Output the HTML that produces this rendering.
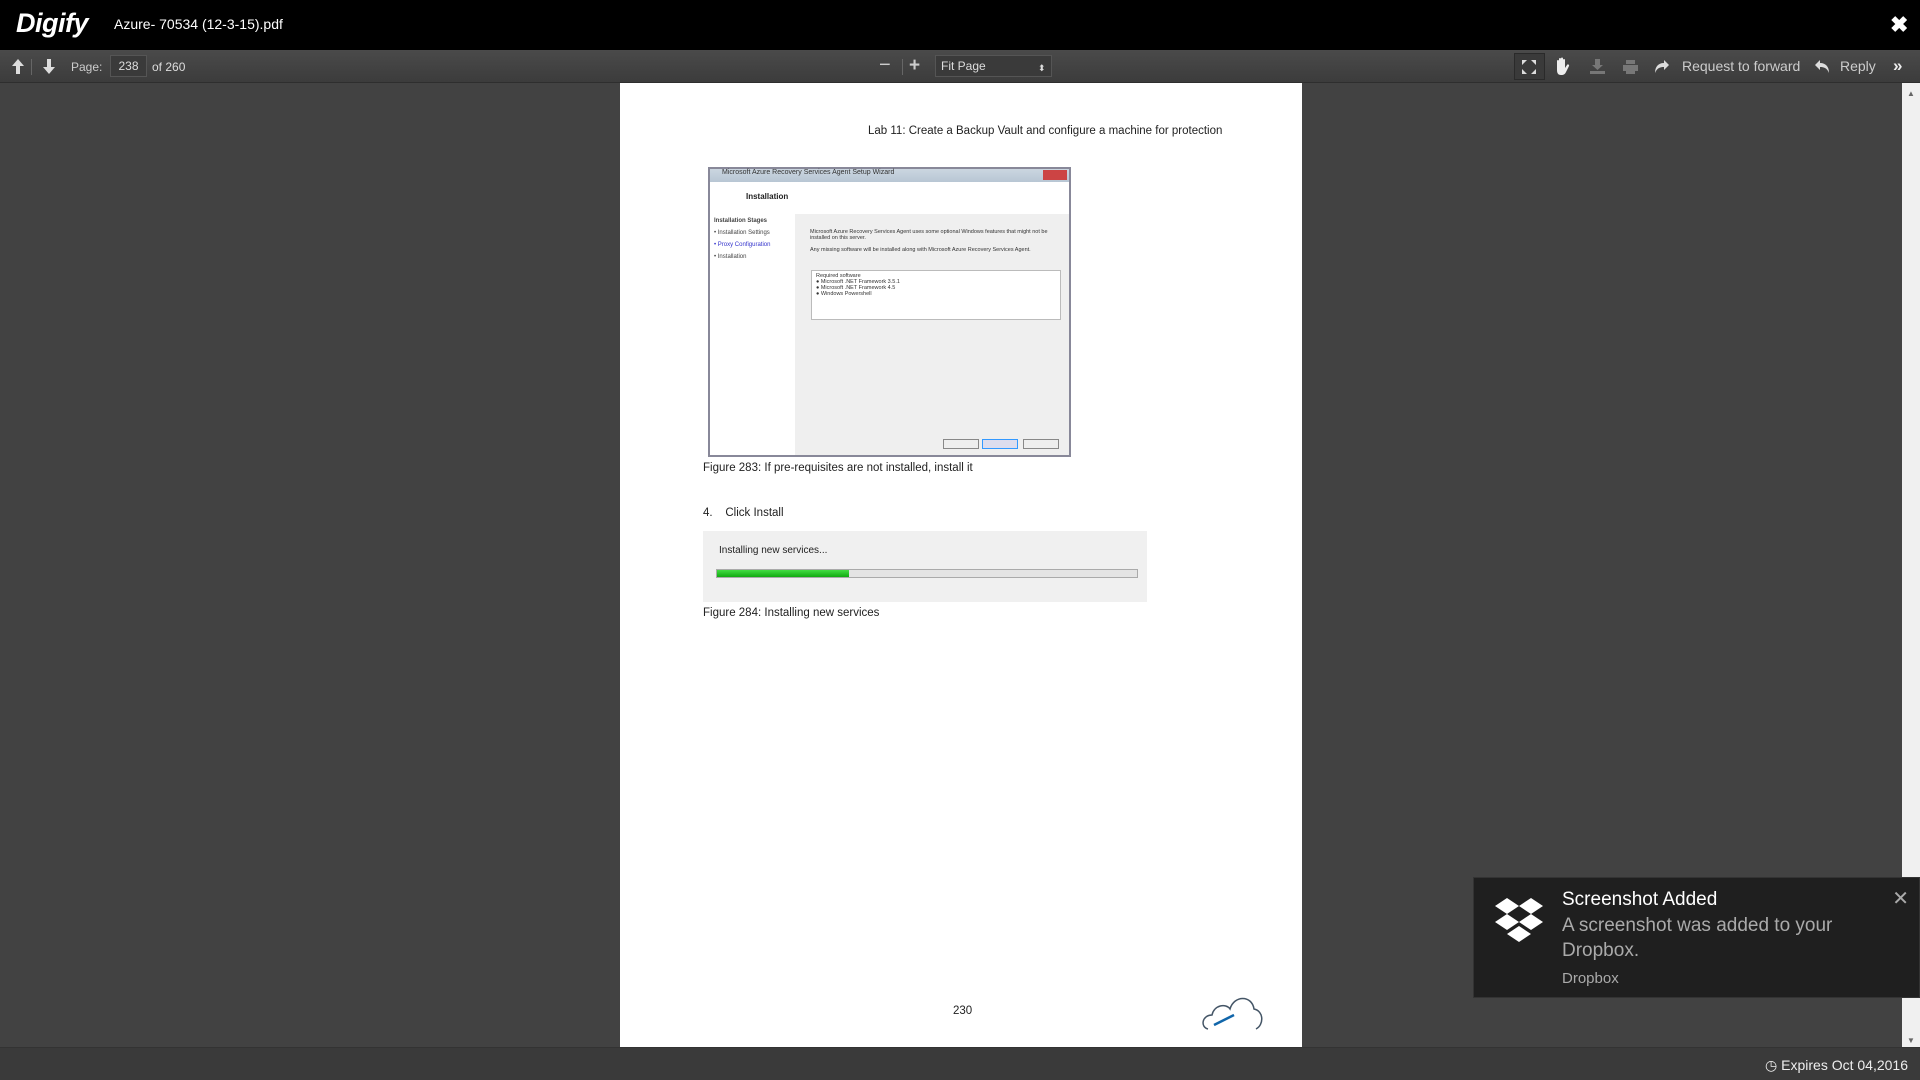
<!DOCTYPE html>
<html><head><meta charset="utf-8"><style>
*{margin:0;padding:0;box-sizing:border-box}
body{width:1920px;height:1080px;background:#424242;font-family:"Liberation Sans",sans-serif;position:relative;overflow:hidden;color:#ddd}
.top{position:absolute;left:0;top:0;width:1920px;height:50px;background:#000}
.logo{position:absolute;left:16px;top:8px;font-size:27px;font-weight:bold;font-style:italic;color:#fff;letter-spacing:-0.5px}
.title{position:absolute;left:114px;top:16px;font-size:14px;color:#fff}
.close{position:absolute;left:1890px;top:12px;font-size:22px;color:#fff;font-weight:bold}
.tb{position:absolute;left:0;top:50px;width:1920px;height:33px;background:linear-gradient(#4a4a4a,#3c3c3c);border-bottom:1px solid #2e2e2e;font-size:12px;color:#ccc}
.tb span{position:absolute;top:10px}
.inp{position:absolute;left:110px;top:5px;width:37px;height:22px;background:#3a3a3a;border:1px solid #555;color:#ddd;text-align:center;line-height:20px;font-size:12px}
.sel{position:absolute;left:935px;top:5px;width:117px;height:22px;background:#3a3a3a;border:1px solid #555;color:#ddd;padding-left:5px;line-height:20px;font-size:12px}
.page{position:absolute;left:620px;top:83px;width:682px;height:964px;background:#fff;color:#222;font-size:11.5px}
.pg{position:absolute}
.foot{position:absolute;left:0;top:1047px;width:1920px;height:33px;background:#3a3a3a;border-top:1px solid #333}
.scroll{position:absolute;left:1902px;top:83px;width:18px;height:964px;background:#f0f0f0}
.notif{position:absolute;left:1473px;top:877px;width:447px;height:121px;background:#1f1f1f;border:1px solid #333}
</style></head><body>
<div class="top"><div class="logo">Digify</div><div class="title">Azure- 70534 (12-3-15).pdf</div><div class="close">✖</div></div>
<div class="tb">
<svg style="position:absolute;left:11px;top:8px" width="14" height="17" viewBox="0 0 14 17"><path d="M7 1L1 8h4v8h4V8h4z" fill="#ddd"/></svg>
<div style="position:absolute;left:31px;top:9px;width:1px;height:16px;background:#666"></div>
<svg style="position:absolute;left:42px;top:8px" width="14" height="17" viewBox="0 0 14 17"><path d="M7 16L1 9h4V1h4v8h4z" fill="#ddd"/></svg>
<span style="left:71px">Page:</span>
<div class="inp">238</div>
<span style="left:152px;color:#ddd">of 260</span>
<span style="left:879px;top:4px;font-size:20px">−</span>
<div style="position:absolute;left:902px;top:9px;width:1px;height:16px;background:#666"></div>
<span style="left:909px;top:5px;font-size:19px;font-weight:bold">+</span>
<div class="sel">Fit Page<span style="left:102px;top:2px;font-size:9px">⬍</span></div>
<div style="position:absolute;left:1514px;top:3px;width:31px;height:27px;border:1px solid #2a2a2a;background:#3a3a3a"></div>
<svg style="position:absolute;left:1521px;top:9px" width="16" height="16" viewBox="0 0 16 16" fill="#ddd"><path d="M1 1h5L1 6zM15 1h-5l5 5zM1 15h5L1 10zM15 15h-5l5-5z"/></svg>
<svg style="position:absolute;left:1554px;top:7px" width="17" height="19" viewBox="0 0 17 19" fill="#eee"><path d="M3 9V4a1 1 0 012 0v4V2a1 1 0 012 0v6V1.5a1 1 0 012 0V8V3a1 1 0 012 0v8l2-3a1 1 0 012 1l-3 6c-1 2-2 3-5 3H7c-3 0-4-2-4-5z"/></svg>
<svg style="position:absolute;left:1589px;top:8px" width="17" height="17" viewBox="0 0 17 17" fill="#777"><path d="M6 1h5v6h3l-5.5 5L3 7h3zM1 13h15v3H1z"/></svg>
<svg style="position:absolute;left:1622px;top:9px" width="17" height="16" viewBox="0 0 17 16" fill="#777"><path d="M4 1h9v4H4zM1 6h15v6h-3v3H4v-3H1z"/></svg>
<svg style="position:absolute;left:1654px;top:9px" width="16" height="15" viewBox="0 0 16 15" fill="#ddd"><path d="M10 1l5 5-5 5V8C6 8 3 9 1 14 1 8 4 4 10 4z"/></svg>
<span style="left:1682px;font-size:14px;top:8px">Request to forward</span>
<svg style="position:absolute;left:1814px;top:9px" width="16" height="15" viewBox="0 0 16 15" fill="#ddd"><path d="M6 1L1 6l5 5V8c4 0 7 1 9 6 0-6-3-10-9-10z"/></svg>
<span style="left:1840px;font-size:14px;top:8px">Reply</span>
<span style="left:1893px;top:6px;font-size:17px;font-weight:bold;color:#eee">»</span>
</div>
<div class="page">
<div class="pg" style="left:248px;top:42px">Lab 11: Create a Backup Vault and configure a machine for protection</div>
<div class="pg" style="left:88px;top:84px;width:363px;height:290px;background:#efefef;border:2px solid #889;">
 <div style="height:13px;background:linear-gradient(#cbd6e0,#b8c6d4);font-size:7px;color:#333;padding-left:12px">Microsoft Azure Recovery Services Agent Setup Wizard</div>
 <div style="position:absolute;right:2px;top:1px;width:24px;height:10px;background:#c44"></div>
 <div style="height:32px;background:#fff;font-size:8px;font-weight:bold;padding:10px 0 0 36px">Installation</div>
 <div style="position:absolute;left:0;top:45px;width:85px;height:241px;background:#fff;font-size:6px;color:#444;padding:4px">
 <b>Installation Stages</b><br><br>• Installation Settings<br><br><span style="color:#33c">• Proxy Configuration</span><br><br>• Installation</div>
 <div style="position:absolute;left:100px;top:60px;font-size:5.5px;color:#333;width:250px">Microsoft Azure Recovery Services Agent uses some optional Windows features that might not be installed on this server.<br><br>Any missing software will be installed along with Microsoft Azure Recovery Services Agent.</div>
 <div style="position:absolute;left:101px;top:101px;width:250px;height:50px;background:#fff;border:1px solid #bbb;font-size:5.5px;color:#333;padding:2px 4px">Required software<br>● Microsoft .NET Framework 3.5.1<br>● Microsoft .NET Framework 4.5<br>● Windows Powershell</div>
 <div style="position:absolute;left:233px;top:270px;width:36px;height:10px;border:1px solid #888;background:#eee"></div>
 <div style="position:absolute;left:272px;top:270px;width:36px;height:10px;border:1px solid #39f;background:#dde"></div>
 <div style="position:absolute;left:313px;top:270px;width:36px;height:10px;border:1px solid #888;background:#eee"></div>
</div>
<div class="pg" style="left:83px;top:379px">Figure 283: If pre-requisites are not installed, install it</div>
<div class="pg" style="left:83px;top:424px">4.&nbsp;&nbsp;&nbsp; Click Install</div>
<div class="pg" style="left:83px;top:448px;width:444px;height:71px;background:#f0f0f0">
 <div style="position:absolute;left:16px;top:14px;font-size:10px">Installing new services...</div>
 <div style="position:absolute;left:13px;top:38px;width:422px;height:9px;border:1px solid #aaa;background:#e4e4e4"><div style="width:132px;height:7px;background:linear-gradient(#4d4,#1a1)"></div></div>
</div>
<div class="pg" style="left:83px;top:524px">Figure 284: Installing new services</div>
<div class="pg" style="left:333px;top:922px">230</div>
<svg class="pg" style="left:580px;top:906px" width="66" height="44" viewBox="0 0 66 44"><path d="M8 40C0 38 2 26 12 26 14 16 26 14 30 20 34 6 52 6 54 20 64 22 64 36 56 40" fill="none" stroke="#456" stroke-width="1.5"/><path d="M14 36L34 26" stroke="#16a" stroke-width="2.5"/></svg>
</div>
<div class="scroll"><div style="position:absolute;left:5px;top:6px;font-size:8px;color:#666">▲</div><div style="position:absolute;left:5px;bottom:2px;font-size:8px;color:#666">▼</div></div>
<div class="foot"><div style="position:absolute;right:12px;top:9px;font-size:14px;color:#eee">◷ Expires Oct 04,2016</div></div>
<div class="notif">
<svg style="position:absolute;left:20px;top:18px" width="50" height="50" viewBox="0 0 50 50" fill="#fff"><path d="M13 2l12 8-12 8-12-8zM37 2l12 8-12 8-12-8zM13 18l12 8-12 8-12-8zM37 18l12 8-12 8-12-8zM25 30l12 8-12 8-12-8z"/></svg>
<div style="position:absolute;left:88px;top:11px;font-size:19px;color:#fff">Screenshot Added</div>
<div style="position:absolute;left:88px;top:35px;font-size:19px;color:#aaa;line-height:25px;width:300px">A screenshot was added to your Dropbox.</div>
<div style="position:absolute;left:88px;top:92px;font-size:15px;color:#aaa">Dropbox</div>
<div style="position:absolute;right:10px;top:8px;font-size:20px;color:#aaa">✕</div>
</div>
</body></html>
